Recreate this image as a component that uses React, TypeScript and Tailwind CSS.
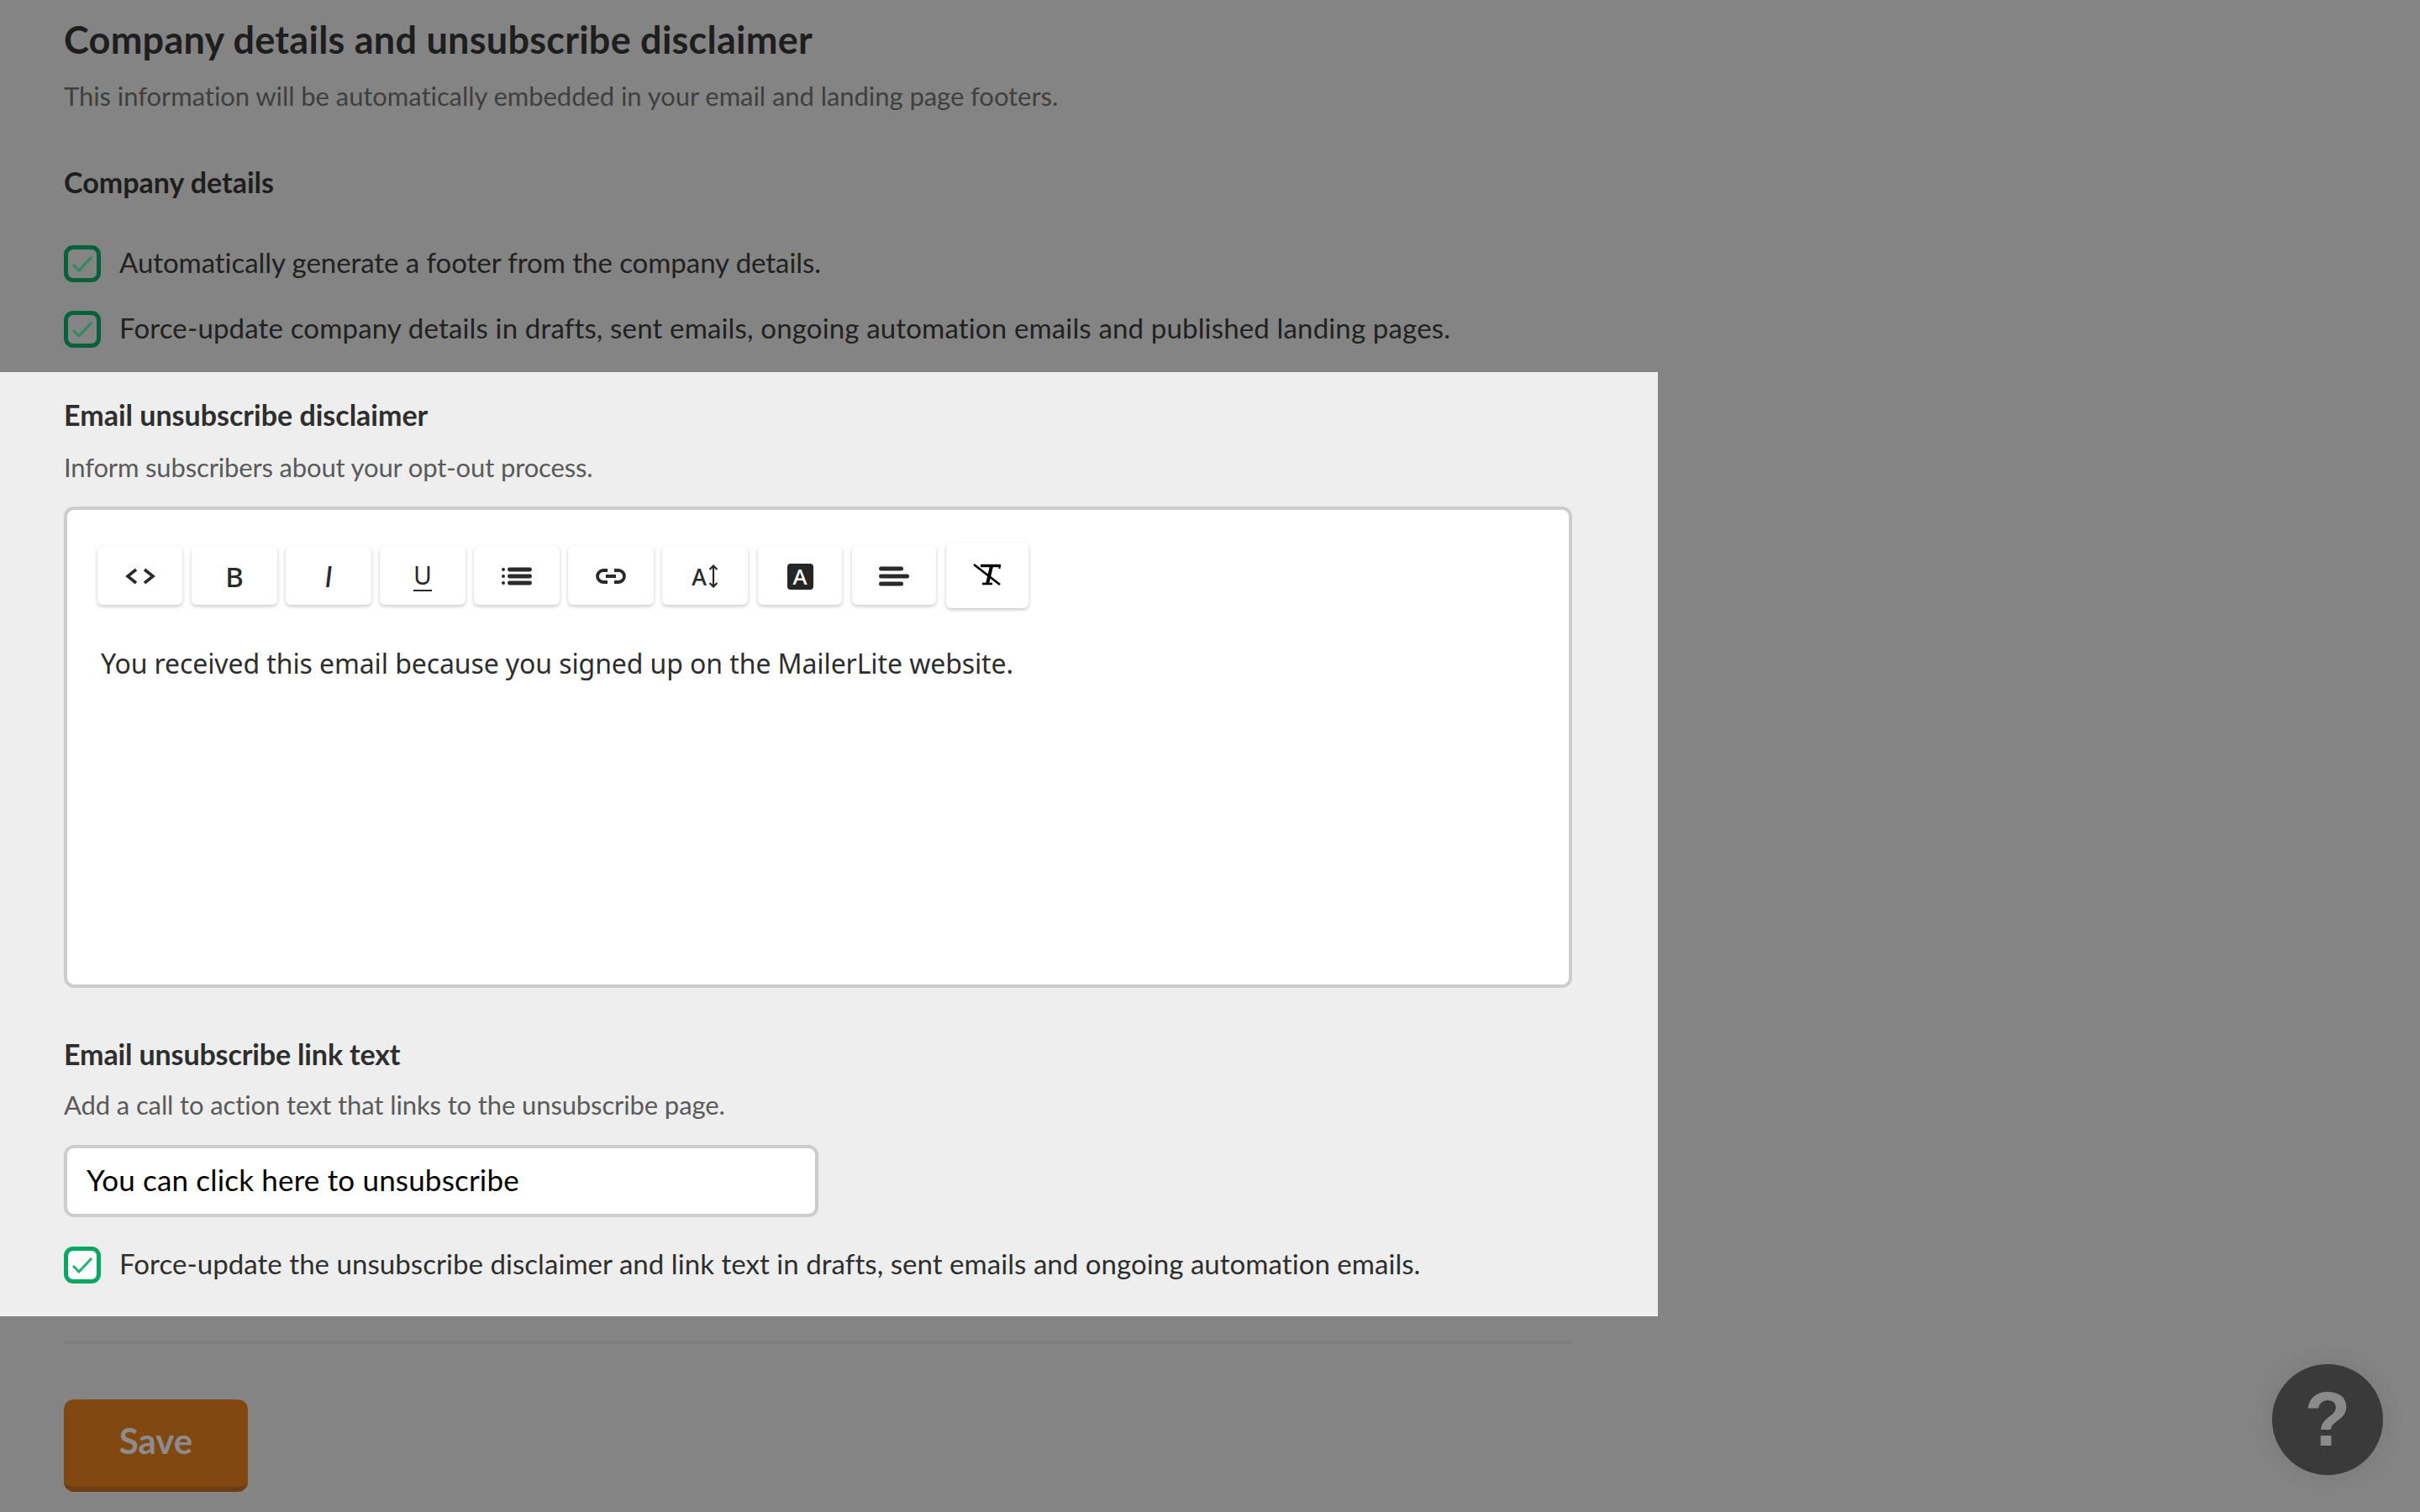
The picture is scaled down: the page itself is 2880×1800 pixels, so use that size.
import React from "react";

const sans = "font-['Lato','Liberation_Sans',sans-serif]";

function Check({ tone }: { tone: "dim" | "bright" }) {
  const box = tone === "dim" ? "border-[#08603c]" : "border-[#08a861] bg-white";
  const stroke = tone === "dim" ? "#2f8a63" : "#1fb56f";
  return (
    <span className={`flex h-[44px] w-[44px] shrink-0 items-center justify-center rounded-[11px] border-[5px] ${box}`}>
      <svg width="26" height="20" viewBox="0 0 26 20" fill="none">
        <path d="M2 11l7 7L24 2" stroke={stroke} strokeWidth="3" />
      </svg>
    </span>
  );
}

function Tool({ className, children }: { className: string; children: React.ReactNode }) {
  return (
    <div className={`flex shrink-0 items-center justify-center rounded-[6px] bg-white pt-[2px] shadow-[0_2px_4px_rgba(0,0,0,0.22)] ${className}`}>
      {children}
    </div>
  );
}

const ico = "font-['Noto_Sans',sans-serif] text-[#2a2a2a]";

export default function App() {
  return (
    <div className={`relative h-[1800px] w-[2880px] overflow-hidden bg-[#848484] ${sans}`}>
      <div className="px-[76px]">
        <h1 className="mt-0 pt-[21px] text-[45px] font-bold leading-[52px] tracking-[0.25px] text-[#1e1e1e]">
          Company details and unsubscribe disclaimer
        </h1>
        <p className="mt-[21px] text-[31px] leading-[40px] tracking-[-0.06px] text-[#3f3f3f]">
          This information will be automatically embedded in your email and landing page footers.
        </p>
        <h2 className="mt-[63px] text-[34px] font-bold leading-[40px] text-[#1e1e1e]">Company details</h2>
        <div className="mt-[55px] flex items-center gap-[22px]">
          <Check tone="dim" />
          <span className="pb-[4px] text-[33px] leading-[40px] tracking-[-0.05px] text-[#212121]">Automatically generate a footer from the company details.</span>
        </div>
        <div className="mt-[34px] flex items-center gap-[22px]">
          <Check tone="dim" />
          <span className="pb-[4px] text-[33px] leading-[40px] tracking-[0.16px] text-[#212121]">
            Force-update company details in drafts, sent emails, ongoing automation emails and published landing pages.
          </span>
        </div>
      </div>

      <section className="mt-[29px] h-[1124px] w-[1973px] bg-[#eeeeee] px-[76px] pt-[31px]">
        <h2 className="text-[34px] font-bold leading-[40px] text-[#2e2e2e]">Email unsubscribe disclaimer</h2>
        <p className="mt-[22px] text-[31px] leading-[40px] tracking-[-0.15px] text-[#5a5a5a]">Inform subscribers about your opt-out process.</p>

        <div className="mt-[27px] h-[573px] w-[1795px] rounded-[12px] border-[4px] border-[#cccccc] bg-white pl-[36px] pt-[43px]">
          <div className="flex h-[70px] items-center">
            <Tool className="h-[70px] w-[101px]">
              <svg width="36" height="20" viewBox="0 0 36 20" fill="none" stroke="#2a2a2a" strokeWidth="3.6">
                <path d="M13 2L3 10l10 8M23 2l10 8-10 8" />
              </svg>
            </Tool>
            <Tool className="ml-[11px] h-[70px] w-[102px]">
              <span className={`${ico} text-[33px] font-medium leading-none`}>B</span>
            </Tool>
            <Tool className="ml-[10px] h-[70px] w-[102px]">
              <span className={`${sans} text-[34px] font-medium italic leading-none text-[#2a2a2a]`}>I</span>
            </Tool>
            <Tool className="ml-[10px] h-[70px] w-[102px]">
              <span className={`${ico} border-b-[2px] border-[#2a2a2a] text-[30px] leading-[34px]`}>U</span>
            </Tool>
            <Tool className="ml-[10px] h-[70px] w-[102px]">
              <svg width="36" height="22" viewBox="0 0 36 22" fill="#2a2a2a">
                <circle cx="2" cy="3" r="2" />
                <circle cx="2" cy="11" r="2" />
                <circle cx="2" cy="19" r="2" />
                <rect x="7" y="0.6" width="29" height="4.8" rx="2.4" />
                <rect x="7" y="8.6" width="29" height="4.8" rx="2.4" />
                <rect x="7" y="16.6" width="29" height="4.8" rx="2.4" />
              </svg>
            </Tool>
            <Tool className="ml-[10px] h-[70px] w-[102px]">
              <svg width="36" height="18" viewBox="0 0 36 18" fill="none" stroke="#2a2a2a" strokeWidth="3.8">
                <path d="M14 2H9a7 7 0 0 0 0 14h5M22 2h5a7 7 0 0 1 0 14h-5" />
                <path d="M12 9h12" strokeWidth="4" />
              </svg>
            </Tool>
            <Tool className="ml-[10px] h-[70px] w-[102px]">
              <span className={`${ico} text-[27px] font-medium leading-none`}>A</span>
              <svg className="ml-[2px]" width="12" height="28" viewBox="0 0 12 28" fill="none" stroke="#2a2a2a" strokeWidth="2.2">
                <path d="M6 1v26M1.5 6L6 1.5 10.5 6M1.5 22L6 26.5l4.5-4.5" />
              </svg>
            </Tool>
            <Tool className="ml-[12px] h-[70px] w-[100px]">
              <span className="flex h-[31px] w-[31px] items-center justify-center rounded-[4px] bg-[#262626] font-['Noto_Sans',sans-serif] text-[26px] font-medium leading-none text-white">
                A
              </span>
            </Tool>
            <Tool className="ml-[12px] h-[70px] w-[100px]">
              <svg width="36" height="24" viewBox="0 0 36 24" fill="#2a2a2a">
                <rect x="0" y="0.5" width="29" height="5" rx="2.5" />
                <rect x="0" y="9.5" width="36" height="5" rx="2.5" />
                <rect x="0" y="18.5" width="29" height="5" rx="2.5" />
              </svg>
            </Tool>
            <Tool className="ml-[12px] h-[78px] w-[98px]">
              <svg className="-mt-[4px]" width="34" height="26" viewBox="0 0 34 26" fill="none" stroke="#000">
                <path d="M1 1l31 24" strokeWidth="2.6" />
                <path d="M9 2.5h24" strokeWidth="3.4" />
                <path d="M31.5 1v5" strokeWidth="2" />
                <path d="M22 3l-5 21" strokeWidth="4" />
                <path d="M11 24h12" strokeWidth="2.6" />
              </svg>
            </Tool>
          </div>
          <p className="ml-[4px] mt-[50px] font-['Noto_Sans',sans-serif] text-[32px] leading-[40px] tracking-[-0.1px] text-[#2e2e2e]">
            You received this email because you signed up on the MailerLite website.
          </p>
        </div>

        <h2 className="mt-[59px] text-[34px] font-bold leading-[40px] tracking-[-0.13px] text-[#2e2e2e]">Email unsubscribe link text</h2>
        <p className="mt-[20px] text-[31px] leading-[40px] tracking-[-0.12px] text-[#5a5a5a]">Add a call to action text that links to the unsubscribe page.</p>
        <div className="mt-[28px] flex h-[86px] w-[898px] items-center rounded-[12px] border-[4px] border-[#cccccc] bg-white pb-[4px] pl-[23px] text-[35px] tracking-[0.18px] text-black">
          You can click here to unsubscribe
        </div>
        <div className="mt-[35px] flex items-center gap-[22px]">
          <Check tone="bright" />
          <span className="pb-[4px] text-[33px] leading-[40px] tracking-[0.05px] text-[#2e2e2e]">
            Force-update the unsubscribe disclaimer and link text in drafts, sent emails and ongoing automation emails.
          </span>
        </div>
      </section>

      <div className="ml-[76px] mt-[29px] h-[4px] w-[1795px] bg-[#7e7e7e]" />
      <button className="ml-[76px] mt-[66px] flex h-[110px] w-[219px] items-center justify-center rounded-[12px] border-b-[6px] border-[#6e3d0f] bg-[#824811] pb-[6px] text-[42px] font-bold text-[#8c8c8c]">
        Save
      </button>

      <div className="absolute left-[2704px] top-[1624px] flex h-[132px] w-[132px] items-center justify-center rounded-full bg-[#3a3a3a] font-['Liberation_Sans',sans-serif] text-[90px] font-bold leading-none text-[#8a8a8a] shadow-[0_0_30px_rgba(0,0,0,0.08)]">
        ?
      </div>
    </div>
  );
}
